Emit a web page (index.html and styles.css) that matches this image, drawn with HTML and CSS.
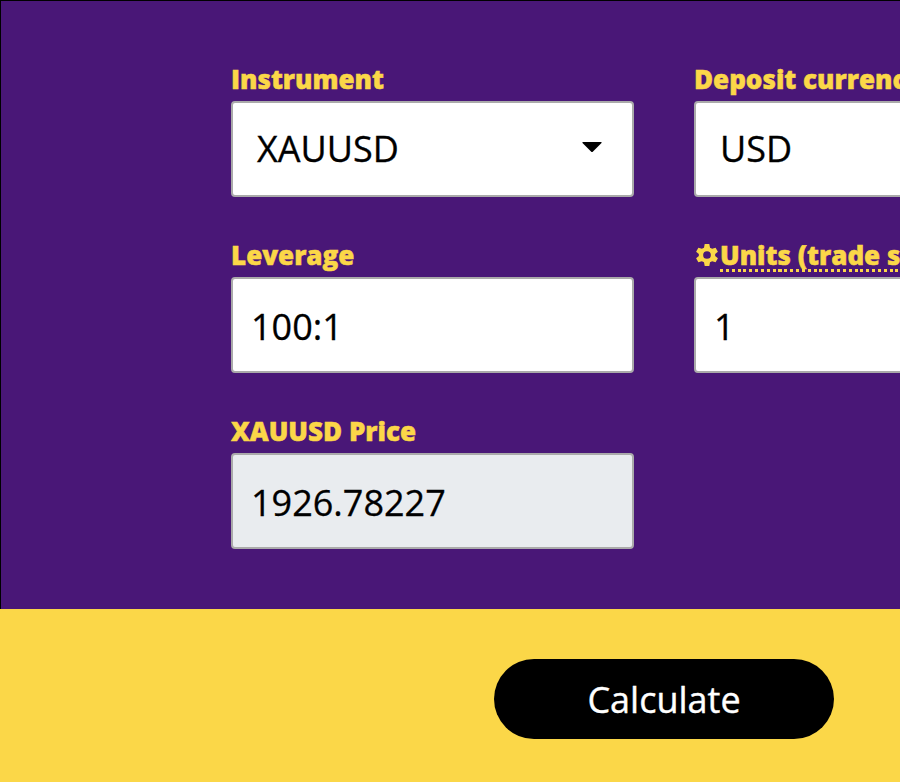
FILE: index.html
```html
<!DOCTYPE html>
<html lang="en">
<head>
<meta charset="utf-8">
<title>Margin calculator</title>
<link rel="stylesheet" href="styles.css">
</head>
<body>
<form class="calculator">
  <div class="fields">
    <div class="field">
      <div class="label">Instrument</div>
      <div class="control select"><span>XAUUSD</span><svg class="caret" viewBox="0 0 20 11"><path d="M.5 0H19.500V1L11 9.600Q10 10.600 9 9.600L.5 1Z"/></svg></div>
    </div>
    <div class="field">
      <div class="label">Deposit currency</div>
      <div class="control select"><span>USD</span></div>
    </div>
    <div class="field">
      <div class="label">Leverage</div>
      <div class="control">100:1</div>
    </div>
    <div class="field">
      <div class="label"><svg class="gear" viewBox="0 0 24 24"><path fill-rule="evenodd" d="M9.500 0H14.500L15.300 4L17.600 5.300L21.400 4L23.900 8.400L20.900 11V13L23.900 15.600L21.400 20L17.600 18.700L15.300 20L14.500 24H9.500L8.700 20L6.400 18.700L2.600 20L.1 15.600L3.100 13V11L.1 8.400L2.600 4L6.400 5.300L8.700 4ZM12 7.800A4.200 4.200 0 1 0 12 16.200A4.200 4.200 0 1 0 12 7.800Z"/></svg><span class="hint">Units (trade size)</span></div>
      <div class="control">1</div>
    </div>
    <div class="field">
      <div class="label">XAUUSD Price</div>
      <div class="control readonly">1926.78227</div>
    </div>
  </div>
  <div class="actions"><button class="submit" type="button">Calculate</button></div>
</form>
</body>
</html>
```
FILE: styles.css
```css
* { box-sizing: border-box; }
body {
  margin: 0;
  overflow: hidden;
  font-family: "Open Sans", sans-serif;
  background: #fbd748;
}
.calculator { width: 1328px; }
.fields {
  display: grid;
  grid-template-columns: 403px 403px;
  column-gap: 60px;
  row-gap: 40px;
  height: 609px;
  padding: 60px 0 0 230px;
  align-content: start;
  border-top: 1px solid #000;
  border-left: 1px solid #000;
  background: #491777;
}
.label {
  display: flex;
  align-items: center;
  height: 40px;
  padding-bottom: 4px;
  color: #fbd748;
  font-size: 26px;
  font-weight: 800;
  line-height: 36px;
  white-space: nowrap;
  -webkit-text-stroke: 0.5px #fbd748;
}
.control {
  display: flex;
  align-items: center;
  height: 96px;
  padding: 2px 18px 0;
  border: 2px solid #aaa;
  border-radius: 4px;
  background: #fff;
  color: #000;
  font-size: 36px;
  -webkit-text-stroke: 0.3px #000;
}
.select {
  justify-content: space-between;
  padding: 0 30px 2px 24px;
}
.readonly { background: #e9ecef; }
.caret { width: 20px; height: 11px; margin-top: -1px; }
.gear { width: 22px; height: 22px; margin: 0 2px 0 2px; fill: #fbd748; }
.hint {
  height: 34px;
  line-height: 34px;
  background: repeating-linear-gradient(90deg, #fbd748 0 3px, transparent 3px 5.850px) 0 100% / 100% 3px no-repeat;
}
.actions {
  display: flex;
  justify-content: center;
  height: 173px;
  padding-top: 50px;
}
.submit {
  width: 340px;
  height: 80px;
  padding: 0;
  border: 0;
  border-radius: 40px;
  background: #000;
  color: #fff;
  font: 36px "Open Sans", sans-serif;
  -webkit-text-stroke: 0.4px #fff;
}
```
